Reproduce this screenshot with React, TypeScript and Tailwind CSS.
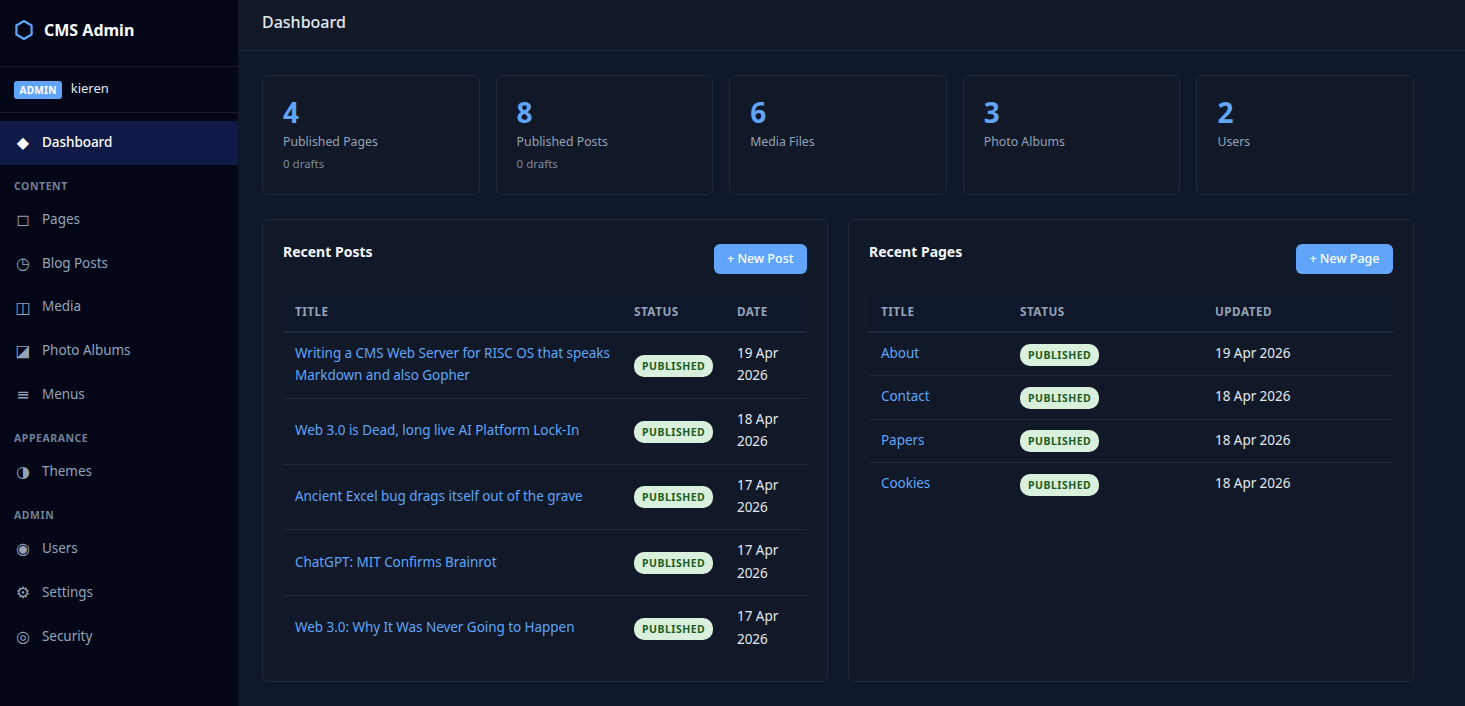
const contentNav = [
  { icon: "◻", label: "Pages" },
  { icon: "◷", label: "Blog Posts" },
  { icon: "◫", label: "Media" },
  { icon: "◪", label: "Photo Albums" },
  { icon: "≡", label: "Menus" },
];
const adminNav = [
  { icon: "◉", label: "Users" },
  { icon: "⚙", label: "Settings" },
  { icon: "◎", label: "Security" },
];
const stats = [
  { value: 4, label: "Published Pages", sub: "0 drafts" },
  { value: 8, label: "Published Posts", sub: "0 drafts" },
  { value: 6, label: "Media Files" },
  { value: 3, label: "Photo Albums" },
  { value: 2, label: "Users" },
];
const posts = [
  { title: "Writing a CMS Web Server for RISC OS that speaks Markdown and also Gopher", date: "19 Apr 2026" },
  { title: "Web 3.0 is Dead, long live AI Platform Lock-In", date: "18 Apr 2026" },
  { title: "Ancient Excel bug drags itself out of the grave", date: "17 Apr 2026" },
  { title: "ChatGPT: MIT Confirms Brainrot", date: "17 Apr 2026" },
  { title: "Web 3.0: Why It Was Never Going to Happen", date: "17 Apr 2026" },
];
const pages = [
  { title: "About", date: "19 Apr 2026" },
  { title: "Contact", date: "18 Apr 2026" },
  { title: "Papers", date: "18 Apr 2026" },
  { title: "Cookies", date: "18 Apr 2026" },
];

function NavItem({ icon, label, active }: { icon: string; label: string; active?: boolean }) {
  return (
    <a className={`flex h-[43.7px] items-center gap-[10px] pl-[14px] text-[13.5px] tracking-[-0.05px] ${active ? "bg-[#0f1b46] font-medium text-white" : "text-[#94a3b8]"}`}>
      <span className="w-[18px] text-center font-['DejaVu_Sans'] text-[16px] leading-none">{icon}</span>
      <span className="pb-[2px]">{label}</span>
    </a>
  );
}

function SectionLabel({ children }: { children: string }) {
  return <div className="flex h-[33.6px] items-center pt-[10px] pl-[14px] text-[10.5px] font-bold tracking-[0.55px] text-[#718096]">{children}</div>;
}

function Badge() {
  return <span className="inline-block rounded-[10px] bg-[#d9f0dc] px-[8px] py-[3px] align-top text-[10.5px] leading-[16px] font-bold tracking-[0.5px] text-[#1b5e20]">PUBLISHED</span>;
}

function Panel({ title, button, children }: { title: string; button: string; children: React.ReactNode }) {
  return (
    <section className="rounded-[6px] border border-[#1e293b] bg-[#111827] px-[20px] pt-[24px] pb-[20px]">
      <div className="mb-[18px] flex items-start justify-between">
        <h2 className="text-[14px] leading-[16px] font-bold text-[#f1f5f9]">{title}</h2>
        <button className="h-[30px] rounded-[6px] bg-[#60a5fa] px-[13.5px] text-[12.5px] font-medium text-white">{button}</button>
      </div>
      {children}
    </section>
  );
}

const th = "h-[40px] border-b-2 border-[#1e293b] bg-[#0f172a] px-[12px] text-left text-[11.7px] font-bold tracking-[0.5px] text-[#94a3b8]";
const td = "border-b border-[#1e293b] px-[12px] pt-[9px] pb-[11px] text-[13.5px] leading-[22.4px] tracking-[-0.05px] group-last:border-b-0";
const badgeTd = "border-b border-[#1e293b] px-[12px] pt-[10.5px] pb-[9.5px] text-[13.5px] leading-[22.4px] group-last:border-b-0";

export default function App() {
  return (
    <div className="flex h-[706px] overflow-hidden bg-[#0f172a] font-['Noto_Sans',sans-serif] text-[#e2e8f0]">
      <aside className="w-[238px] shrink-0 bg-[#020617]">
        <div className="flex h-[67px] items-center gap-[10px] border-b border-[#171d30] pb-[6px] pl-[14px]">
          <svg width="20" height="22" viewBox="0 0 20 22" fill="none" stroke="#60a5fa" strokeWidth="2.2" strokeLinejoin="round">
            <path d="M10 2 L17.6 6.5 V15.5 L10 20 L2.4 15.5 V6.5 Z" />
          </svg>
          <span className="text-[16px] font-bold text-white">CMS Admin</span>
        </div>
        <div className="flex h-[46px] items-center gap-[8.5px] border-b border-[#171d30] pl-[14px] text-[13px] text-[#e2e8f0]">
          <span className="rounded-[3px] bg-[#60a5fa] px-[5.5px] py-[2px] text-[10px] leading-[14px] font-bold tracking-[0.3px] text-white">ADMIN</span>
          <span className="pb-[2px]">kieren</span>
        </div>
        <nav className="pt-[8px]">
          <NavItem icon="◆" label="Dashboard" active />
          <SectionLabel>CONTENT</SectionLabel>
          {contentNav.map((n) => <NavItem key={n.label} {...n} />)}
          <SectionLabel>APPEARANCE</SectionLabel>
          <NavItem icon="◑" label="Themes" />
          <SectionLabel>ADMIN</SectionLabel>
          {adminNav.map((n) => <NavItem key={n.label} {...n} />)}
        </nav>
      </aside>
      <main className="min-w-0 flex-1">
        <header className="flex h-[51px] items-center border-b border-[#1e293b] bg-[#111827] px-[24px] pb-[6px] text-[16px] font-medium text-[#e2e8f0]">Dashboard</header>
        <div className="max-w-[1200px] p-[24px]">
          <div className="mb-[24px] grid grid-cols-5 gap-[16px]">
            {stats.map((s) => (
              <div key={s.label} className="h-[120px] rounded-[6px] border border-[#1e293b] bg-[#111827] px-[20px] pt-[17px]">
                <div className="text-[28px] leading-[38px] font-bold text-[#60a5fa]">{s.value}</div>
                <div className="text-[12.3px] leading-[22px] text-[#94a3b8]">{s.label}</div>
                {s.sub && <div className="mt-[2px] text-[11.5px] leading-[18px] text-[#7c8aa0]">{s.sub}</div>}
              </div>
            ))}
          </div>
          <div className="grid h-[462.5px] grid-cols-2 gap-[20px]">
            <Panel title="Recent Posts" button="+ New Post">
              <table className="w-full table-fixed border-collapse">
                <thead>
                  <tr>
                    <th className={`${th} w-[339px]`}>TITLE</th>
                    <th className={`${th} w-[103px]`}>STATUS</th>
                    <th className={th}>DATE</th>
                  </tr>
                </thead>
                <tbody>
                  {posts.map((p) => (
                    <tr key={p.title} className="group">
                      <td className={`${td} text-[#60a5fa]`}>{p.title}</td>
                      <td className={badgeTd}><Badge /></td>
                      <td className={td}>{p.date}</td>
                    </tr>
                  ))}
                </tbody>
              </table>
            </Panel>
            <Panel title="Recent Pages" button="+ New Page">
              <table className="w-full table-fixed border-collapse">
                <thead>
                  <tr>
                    <th className={`${th} w-[139px]`}>TITLE</th>
                    <th className={`${th} w-[195px]`}>STATUS</th>
                    <th className={th}>UPDATED</th>
                  </tr>
                </thead>
                <tbody>
                  {pages.map((p) => (
                    <tr key={p.title} className="group">
                      <td className={`${td} text-[#60a5fa]`}>{p.title}</td>
                      <td className={badgeTd}><Badge /></td>
                      <td className={td}>{p.date}</td>
                    </tr>
                  ))}
                </tbody>
              </table>
            </Panel>
          </div>
        </div>
      </main>
    </div>
  );
}
